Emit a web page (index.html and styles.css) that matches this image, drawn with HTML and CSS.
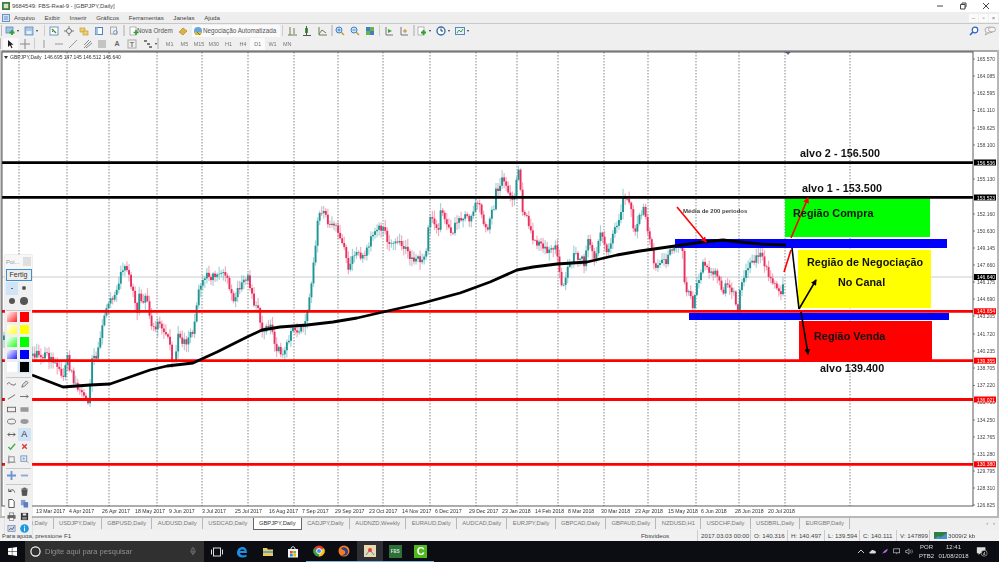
FILE: index.html
```html
<!DOCTYPE html>
<html lang="pt">
<head>
<meta charset="utf-8">
<title>9684549: FBS-Real-9 - [GBPJPY,Daily]</title>
<link rel="stylesheet" href="styles.css">
</head>
<body>
<div class="app">
  <header class="titlebar">
    <svg class="applogo" viewBox="0 0 9 9"><rect width="9" height="9" fill="#3f7d3f"/><rect x="2" y="2" width="5" height="5" fill="#d5e6c8"/></svg>
    <span class="title">9684549: FBS-Real-9 - [GBPJPY,Daily]</span>
    <div class="winctl">
      <svg viewBox="0 0 8 8"><path d="M1 4h6" stroke="#444"/></svg>
      <svg viewBox="0 0 8 8"><path d="M1.500 2.500h4.500v4.500h-4.500zM3 2.500v-1.500h4v4h-1" fill="none" stroke="#444"/></svg>
      <svg viewBox="0 0 8 8"><path d="M1 1l6 6M7 1l-6 6" stroke="#444"/></svg>
    </div>
  </header>

  <nav class="menubar">
    <svg class="menuicon" viewBox="0 0 8 8"><rect x=".5" y=".5" width="7" height="7" fill="#cfe0f4" stroke="#6d93c4"/><path d="M2 3h4M2 5h4" stroke="#6d93c4"/></svg>
    <span>Arquivo</span><span>Exibir</span><span>Inserir</span><span>Gráficos</span><span>Ferramentas</span><span>Janelas</span><span>Ajuda</span>
    <div class="mdictl"><i>–</i><i>▫</i><i>×</i></div>
  </nav>

  <div class="toolbar">
    <span class="grip"></span>
    <span class="btn wide"><svg viewBox="0 0 10 10"><rect x="1" y="1" width="7" height="6" fill="#9cc3e6" stroke="#4f81bd" stroke-width=".7"/><path d="M7 4v5M4.500 6.500h5" stroke="#2ea32e" stroke-width="1.800"/></svg><b class="caret"></b></span>
    <span class="btn wide"><svg viewBox="0 0 10 10"><rect x="1" y="1" width="8" height="8" fill="#a9c7e8" stroke="#4f81bd" stroke-width=".7"/><rect x="2.500" y="5" width="5" height="3" fill="#e8eef5"/></svg><b class="caret"></b></span>
    <span class="sep"></span>
    <span class="btn"><svg viewBox="0 0 10 10"><rect x="1" y="1" width="8" height="8" fill="#fff" stroke="#4f81bd" stroke-width=".8"/><path d="M3 3l4 4" stroke="#2ea32e" stroke-width="1.500"/><path d="M3 6l1-1" stroke="#d33"/></svg></span>
    <span class="btn"><svg viewBox="0 0 10 10"><circle cx="5" cy="5" r="2.500" fill="none" stroke="#777"/><path d="M5 0v3M5 7v3M0 5h3M7 5h3" stroke="#777"/></svg></span>
    <span class="btn"><svg viewBox="0 0 10 10"><rect x="1" y="2" width="5" height="4" fill="#f0cf6a" stroke="#b8912c" stroke-width=".6"/><rect x="4" y="5" width="5" height="4" fill="#f0cf6a" stroke="#b8912c" stroke-width=".6"/></svg></span>
    <span class="btn"><svg viewBox="0 0 10 10"><rect x="1.500" y="1.500" width="7" height="7" fill="#fff" stroke="#4f81bd"/><rect x="1.500" y="1.500" width="2.500" height="7" fill="#9cc3e6"/></svg></span>
    <span class="btn"><svg viewBox="0 0 10 10"><rect x="1.500" y="1" width="6" height="7" fill="#eee" stroke="#aaa"/><circle cx="6.500" cy="6.500" r="2" fill="none" stroke="#7a9cc4"/></svg></span>
    <span class="sep"></span>
    <span class="btn"><svg viewBox="0 0 10 10"><rect x="1" y="1" width="6" height="8" fill="#fff" stroke="#999" stroke-width=".7"/><path d="M7 4v5M4.500 6.500h5" stroke="#2ea32e" stroke-width="1.600"/></svg></span>
    <span class="label order">Nova Ordem</span>
    <span class="btn goldbtn"><svg viewBox="0 0 10 10"><path d="M1 6l4-4 4 3-4 4z" fill="#e0b040" stroke="#a07820" stroke-width=".6"/></svg></span>
    <span class="autotrade"><svg viewBox="0 0 10 10"><circle cx="5" cy="5" r="4" fill="#6aa6d8"/><path d="M2 6h6v3H2z" fill="#e8b03c"/><path d="M4 6l3 3" stroke="#2ea32e"/></svg><span>Negociação Automatizada</span></span>
    <span class="sep"></span>
    <span class="btn"><svg viewBox="0 0 10 10"><path d="M3 1v8M7 2v6M1 9h9" stroke="#6a7f55" fill="none"/></svg></span>
    <span class="btn"><svg viewBox="0 0 10 10"><rect x="3" y="2" width="3" height="5" fill="#3fa33f"/><path d="M4.500 0v9M1 9.500h8" stroke="#555"/></svg></span>
    <span class="btn"><svg viewBox="0 0 10 10"><path d="M2 1v8h8M2 8l3-4 4 3" stroke="#6a7f55" fill="none"/></svg></span>
    <span class="sep tight"></span>
    <span class="btn"><svg viewBox="0 0 10 10"><circle cx="4" cy="4" r="3" fill="#cfe4f8" stroke="#3f7fc4"/><path d="M6 6l3 3" stroke="#c79a3a" stroke-width="1.500"/><path d="M2.500 4h3M4 2.500v3" stroke="#2f6fb4" stroke-width=".8"/></svg></span>
    <span class="btn"><svg viewBox="0 0 10 10"><circle cx="4" cy="4" r="3" fill="#cfe4f8" stroke="#3f7fc4"/><path d="M6 6l3 3" stroke="#c79a3a" stroke-width="1.500"/><path d="M2.500 4h3" stroke="#2f6fb4" stroke-width=".8"/></svg></span>
    <span class="btn"><svg viewBox="0 0 10 10"><rect x="1" y="1" width="4" height="4" fill="#3f7fc4"/><rect x="5" y="1" width="4" height="4" fill="#6fb04a"/><rect x="1" y="5" width="4" height="4" fill="#6fb04a"/><rect x="5" y="5" width="4" height="4" fill="#3f7fc4"/></svg></span>
    <span class="sep"></span>
    <span class="btn"><svg viewBox="0 0 10 10"><path d="M2 1v8h7" stroke="#777" fill="none"/><path d="M4 3l4 2-4 2z" fill="#3fa33f"/></svg></span>
    <span class="btn"><svg viewBox="0 0 10 10"><path d="M2 1v8h7" stroke="#777" fill="none"/><path d="M4 5h4M6 3v4" stroke="#c8862e"/></svg></span>
    <span class="sep"></span>
    <span class="btn wide"><svg viewBox="0 0 10 10"><rect x="1" y="1" width="6" height="8" fill="#fff" stroke="#999" stroke-width=".7"/><path d="M6.500 4v5M4 6.500h5" stroke="#2ea32e" stroke-width="1.800"/></svg><b class="caret"></b></span>
    <span class="btn wide"><svg viewBox="0 0 10 10"><circle cx="5" cy="5" r="4" fill="#fff" stroke="#2f6fb4" stroke-width="1.400"/><path d="M5 2.500V5h2" stroke="#333" fill="none"/></svg><b class="caret"></b></span>
    <span class="btn wide"><svg viewBox="0 0 10 10"><rect x=".5" y="1.500" width="9" height="7" fill="#e8f0fa" stroke="#5a87bd"/><path d="M2 7l2-3 2 2 2-3" stroke="#3fa33f" fill="none"/></svg><b class="caret"></b></span>
    <div class="findarea">
      <svg viewBox="0 0 10 10"><circle cx="6" cy="4" r="2.800" fill="#fff" stroke="#2f62c4" stroke-width="1.200"/><path d="M4 6L1 9" stroke="#2f62c4" stroke-width="1.600"/></svg>
      <svg class="chat" viewBox="0 0 12 10"><ellipse cx="5" cy="4" rx="4" ry="3" fill="#f4f4f4" stroke="#aaa"/><ellipse cx="8" cy="3.500" rx="3.500" ry="2.500" fill="#f4f4f4" stroke="#aaa"/><path d="M2 6.500L1.500 9l3-2" fill="#f4f4f4" stroke="#aaa"/></svg>
    </div>
  </div>

  <div class="toolbar second">
    <span class="grip"></span>
    <span class="btn on"><svg viewBox="0 0 10 10"><path d="M3 1v7l2-1.800 1.500 3 1-.5-1.500-3H8.500z" fill="#222"/></svg></span>
    <span class="btn"><svg viewBox="0 0 10 10"><path d="M5 0v10M0 5h10" stroke="#888"/></svg></span>
    <span class="sep"></span>
    <span class="btn"><svg viewBox="0 0 10 10"><path d="M5 1v8" stroke="#999"/></svg></span>
    <span class="btn"><svg viewBox="0 0 10 10"><path d="M1 5h8" stroke="#999"/></svg></span>
    <span class="btn"><svg viewBox="0 0 10 10"><path d="M1 9l8-8" stroke="#999"/></svg></span>
    <span class="btn"><svg viewBox="0 0 10 10"><path d="M1 9l7-7M3 9l6-5M1 6l5-5" stroke="#888" fill="none"/></svg></span>
    <span class="btn"><svg viewBox="0 0 10 10"><path d="M1 2h8M1 4h8M1 6h8M1 8h8" stroke="#999" fill="none"/></svg></span>
    <span class="btn txt">A</span>
    <span class="btn"><svg viewBox="0 0 10 10"><rect x="1" y="1" width="8" height="8" fill="none" stroke="#aaa"/><text x="5" y="7.500" class="mini">T</text></svg></span>
    <span class="btn wide"><svg viewBox="0 0 10 10"><path d="M1 2h3M4 5h3M6 8h3" stroke="#555" stroke-width="1.400"/></svg><b class="caret"></b></span>
    <span class="sep wide-gap"></span>
    <span class="tf">M1</span><span class="tf">M5</span><span class="tf">M15</span><span class="tf">M30</span><span class="tf">H1</span><span class="tf">H4</span><span class="tf cur">D1</span><span class="tf">W1</span><span class="tf">MN</span>
  </div>

  <main class="chart">
    <svg class="plot" viewBox="0 50 999 466" width="999" height="466">
      <rect x="0" y="50" width="999" height="466" fill="#fff"/>
      <rect x="0" y="50" width="999" height="2" fill="#a8a8a8"/>
      <rect x="0" y="50" width="2" height="466" fill="#c8c8c8"/>
      <rect x="997" y="50" width="2" height="466" fill="#b8b8b8"/>
      <path class="grid" d="M19 52V506M67 52V506M109 52V506M157 52V506M202 52V506M248 52V506M294 52V506M338 52V506M383 52V506M430 52V506M476 52V506M517 52V506M558 52V506M604 52V506M648 52V506M696 52V506M739 52V506M785 52V506M850 52V506"/>
      <path d="M2 277H973" stroke="#c9ced4" stroke-width="1"/>
      <g id="candles"></g>

      <rect x="785" y="198" width="145" height="39" fill="#00ff00"/>
      <rect x="798" y="250" width="133" height="58" fill="#ffff00"/>
      <rect x="799" y="321" width="133" height="40" fill="#ff0000"/>
      <rect x="675" y="239" width="272" height="9" fill="#0000ff"/>
      <rect x="689" y="313" width="260" height="7" fill="#0000ff"/>

      <path class="hl black" d="M2 162.700H973M2 197.300H973"/>
      <path class="hl red" d="M2 311.300H973M2 360.700H973M2 399.500H973M2 464.300H973"/>
      <path class="ma" d="M32 375L63 387L90 385L110 384L130 377L150 370L167 366L193 363L217 352L247 337L262 330L280 327L307 325L333 322L357 318L383 312L423 303L460 293L490 282L517 270L533 267L557 264L587 262L617 255L640 251L675 246L703 242L723 240L740 242L760 244L786 245"/>

      <defs>
        <marker id="ar" markerWidth="6" markerHeight="6" refX="5" refY="3" orient="auto" markerUnits="userSpaceOnUse"><path d="M0 0L6 3L0 6z" fill="#f00"/></marker>
        <marker id="ak" markerWidth="6" markerHeight="6" refX="5" refY="3" orient="auto" markerUnits="userSpaceOnUse"><path d="M0 0L6 3L0 6z" fill="#000"/></marker>
      </defs>
      <path class="arrow r" d="M677 207L706 242" marker-end="url(#ar)"/>
      <path class="arrow r" d="M784 272L791 250"/>
      <path class="arrow r" d="M791 238L808 198" marker-end="url(#ar)"/>
      <path class="arrow k" d="M792 248L799 309"/>
      <path class="arrow k" d="M799 309L816 280" marker-end="url(#ak)"/>
      <path class="arrow k" d="M801 312L808 354" marker-end="url(#ak)"/>

      <text class="note" x="683" y="213">Média de 200 periodos</text>
      <text class="big" x="800" y="157">alvo 2 - 156.500</text>
      <text class="big" x="802" y="192">alvo 1 - 153.500</text>
      <text class="big" x="793" y="217">Região Compra</text>
      <text class="big" x="807" y="266">Região de Negociação</text>
      <text class="big" x="838" y="286">No Canal</text>
      <text class="big" x="814" y="340">Região Venda</text>
      <text class="big" x="820" y="372">alvo 139.400</text>

      <text class="info" x="10" y="59">GBPJPY,Daily  146.695 147.145 146.512 146.640</text>
      <path d="M4 56h4l-2 3z" fill="#333"/>
      <path d="M785.500 52h5l-2.500 3z" fill="#5a6f9a"/>

      <rect x="2" y="52" width="971" height="454" class="frame"/>
      <path class="ticks" d="M973 59h2M973 76h2M973 93h2M973 110.500h2M973 128h2M973 145h2M973 179h2M973 214h2M973 231h2M973 248h2M973 265h2M973 282h2M973 299h2M973 316h2M973 334h2M973 351h2M973 368h2M973 385.500h2M973 420h2M973 437h2M973 454h2M973 471h2M973 488h2M973 505h2"/>
      <g class="axis">
        <text x="977" y="61">165.570</text><text x="977" y="78">164.085</text><text x="977" y="95">162.595</text><text x="977" y="112">161.110</text><text x="977" y="130">159.625</text><text x="977" y="147">158.100</text><text x="977" y="181">155.130</text><text x="977" y="216">152.160</text><text x="977" y="233">150.630</text><text x="977" y="250">149.145</text><text x="977" y="267">147.660</text><text x="977" y="284">146.175</text><text x="977" y="301">144.690</text><text x="977" y="318">143.205</text><text x="977" y="336">141.720</text><text x="977" y="353">140.235</text><text x="977" y="370">138.705</text><text x="977" y="387">137.220</text><text x="977" y="404">135.735</text><text x="977" y="422">134.250</text><text x="977" y="439">132.765</text><text x="977" y="456">131.280</text><text x="977" y="473">129.795</text><text x="977" y="490">128.310</text><text x="977" y="507">126.825</text>
      </g>
      <g class="pricetag">
        <rect x="974" y="159.500" width="22" height="6" fill="#000"/><text x="977" y="164.500">156.536</text>
        <rect x="974" y="194.500" width="22" height="6" fill="#000"/><text x="977" y="199.500">153.523</text>
        <rect x="974" y="274" width="22" height="6" fill="#000"/><text x="977" y="279">146.640</text>
        <rect x="974" y="308.300" width="22" height="6" fill="#f00"/><text x="977" y="313.300">143.654</text>
        <rect x="974" y="357.700" width="22" height="6" fill="#f00"/><text x="977" y="362.700">139.355</text>
        <rect x="974" y="396.500" width="22" height="6" fill="#f00"/><text x="977" y="401.500">136.021</text>
        <rect x="974" y="461.300" width="22" height="6" fill="#f00"/><text x="977" y="466.300">130.380</text>
      </g>
      <g class="dates">
        <text x="36" y="513">13 Mar 2017</text><text x="69" y="513">4 Apr 2017</text><text x="102" y="513">26 Apr 2017</text><text x="135" y="513">18 May 2017</text><text x="169" y="513">9 Jun 2017</text><text x="202" y="513">3 Jul 2017</text><text x="235" y="513">25 Jul 2017</text><text x="269" y="513">16 Aug 2017</text><text x="302" y="513">7 Sep 2017</text><text x="335" y="513">29 Sep 2017</text><text x="369" y="513">23 Oct 2017</text><text x="402" y="513">14 Nov 2017</text><text x="435" y="513">6 Dec 2017</text><text x="469" y="513">29 Dec 2017</text><text x="502" y="513">23 Jan 2018</text><text x="535" y="513">14 Feb 2018</text><text x="568" y="513">8 Mar 2018</text><text x="601" y="513">30 Mar 2018</text><text x="635" y="513">23 Apr 2018</text><text x="668" y="513">15 May 2018</text><text x="701" y="513">6 Jun 2018</text><text x="735" y="513">28 Jun 2018</text><text x="768" y="513">20 Jul 2018</text>
      </g>
    </svg>
  </main>

  <div class="tabs">
    <span class="tab first">EURUSD,Daily</span><span class="tab">USDJPY,Daily</span><span class="tab">GBPUSD,Daily</span><span class="tab">AUDUSD,Daily</span><span class="tab">USDCAD,Daily</span><span class="tab active">GBPJPY,Daily</span><span class="tab">CADJPY,Daily</span><span class="tab">AUDNZD,Weekly</span><span class="tab">EURAUD,Daily</span><span class="tab">AUDCAD,Daily</span><span class="tab">EURJPY,Daily</span><span class="tab">GBPCAD,Daily</span><span class="tab">GBPAUD,Daily</span><span class="tab">NZDUSD,H1</span><span class="tab">USDCHF,Daily</span><span class="tab">USDBRL,Daily</span><span class="tab">EURGBP,Daily</span>
    <span class="tabnav">‹ &nbsp; ›</span>
  </div>

  <footer class="status">
    <span class="help">Para ajuda, pressione F1</span>
    <span class="cell st-name">Fbsvideos</span>
    <span class="cell st-time">2017.03.03 00:00</span>
    <span class="cell st-o">O: 140.316</span>
    <span class="cell st-h">H: 140.497</span>
    <span class="cell st-l">L: 139.594</span>
    <span class="cell st-c">C: 140.111</span>
    <span class="cell st-v">V: 147899</span>
    <span class="cell st-conn"><svg viewBox="0 0 13 7"><rect width="13" height="7" fill="#2f7f3f"/><path d="M0 7L4 4 7 5 13 1V7z" fill="#4a90d0"/></svg>3009/2 kb</span>
  </footer>

  <div class="taskbar">
    <span class="start"><svg viewBox="0 0 10 10"><path d="M0 1.400L4.300.8V4.700H0zM4.800.7L10 0V4.700H4.800zM0 5.200H4.300V9.200L0 8.600zM4.800 5.200H10V10L4.800 9.300z" fill="#fff"/></svg></span>
    <span class="search">
      <svg class="ring" viewBox="0 0 12 12"><circle cx="6" cy="6" r="5" fill="none" stroke="#fff" stroke-width="1.300"/></svg>
      <span class="ph">Digite aqui para pesquisar</span>
      <svg class="mic" viewBox="0 0 8 12"><rect x="2.500" y="1" width="3" height="6" rx="1.500" fill="none" stroke="#888"/><path d="M1 5c0 5 6 5 6 0M4 9v2" fill="none" stroke="#888"/></svg>
    </span>
    <span class="tbtn"><svg viewBox="0 0 12 10"><rect x="2.500" y="1" width="7" height="8" fill="none" stroke="#ddd"/><path d="M.5 2.500v5M11.500 2.500v5" stroke="#ddd"/></svg></span>
    <span class="tbtn"><svg viewBox="0 0 12 12"><path d="M1 7c0-4 3-6 5.500-6S11 3 11 7H4c.3 2.500 4 3 6.500 1.500v2.300C7 12.500 1 11.500 1 7zM4 5h4.500C8.300 3 4.500 3 4 5z" fill="#1b8fe0"/></svg></span>
    <span class="tbtn"><svg viewBox="0 0 12 12"><path d="M1 2h4l1 1.500h5V10H1z" fill="#f2c94c"/><rect x="1" y="5" width="10" height="2" fill="#5aa6dc"/></svg></span>
    <span class="tbtn"><svg viewBox="0 0 12 12"><rect x="1" y="3" width="10" height="8.500" fill="#f4f4f4"/><path d="M4 3c0-3 4-3 4 0" fill="none" stroke="#f4f4f4"/><rect x="3" y="5" width="2.700" height="2.500" fill="#e8452c"/><rect x="6.300" y="5" width="2.700" height="2.500" fill="#7cb82f"/><rect x="3" y="8" width="2.700" height="2.500" fill="#1b8fe0"/><rect x="6.300" y="8" width="2.700" height="2.500" fill="#f5b800"/></svg></span>
    <span class="tbtn mark"><svg viewBox="0 0 12 12"><circle cx="6" cy="6" r="5.500" fill="#e33b2e"/><path d="M6 6L11 3.200A5.500 5.500 0 0 1 6 11.500z" fill="#f6c321"/><path d="M6 6L6 11.500A5.500 5.500 0 0 1 1 3.200z" fill="#2fa24b"/><circle cx="6" cy="6" r="2.500" fill="#4a8fe8" stroke="#fff" stroke-width=".9"/></svg></span>
    <span class="tbtn mark"><svg viewBox="0 0 12 12"><circle cx="6" cy="6" r="5.500" fill="#f57c1f"/><path d="M3 3c3-2 7 0 7 4 0 3-4 5-7 3 3 0 5-1 4-4-1-1-3-1-4-3z" fill="#2b3f8f"/></svg></span>
    <span class="tbtn active mark"><svg viewBox="0 0 12 12"><rect x="0" y="0" width="12" height="12" fill="#e8d9b0"/><path d="M2 10L6 5l4 5" stroke="#3f8fd0" fill="none"/><circle cx="6" cy="5" r="2" fill="#e2443a"/></svg></span>
    <span class="tbtn mark"><span class="fbs">FBS</span></span>
    <span class="tbtn mark"><span class="cbox">C</span></span>
    <div class="tray">
      <svg viewBox="0 0 8 5" class="ti"><path d="M1 4l3-3 3 3" fill="none" stroke="#ccc"/></svg>
      <svg viewBox="0 0 12 8" class="ti"><path d="M2 7C0 7 0 4 2.500 4 3 1 7 1 8 3c3 0 3 4 1 4z" fill="#ddd"/></svg>
      <svg viewBox="0 0 10 10" class="ti"><path d="M1 9C3 4 6 2 9 1 8.500 5 6 7 3 7z" fill="#b266d8"/></svg>
      <svg viewBox="0 0 12 10" class="ti"><rect x="1" y="1" width="9" height="6" fill="none" stroke="#ccc"/><path d="M5.500 7v2" stroke="#ccc"/></svg>
      <svg viewBox="0 0 12 10" class="ti"><path d="M1 3.500h2L6 1v8L3 6.500H1z" fill="none" stroke="#ccc"/><path d="M8 3c1 1 1 3 0 4M10 2c1.500 2 1.500 4 0 6" fill="none" stroke="#ccc" stroke-width=".8"/></svg>
      <span class="lang"><span>POR</span><span>PTB2</span></span>
      <span class="clock"><span>12:41</span><span>01/08/2018</span></span>
      <svg viewBox="0 0 14 12" class="notif"><path d="M1 1h10v7H5L3 10V8H1z" fill="#ddd"/><circle cx="9.500" cy="8" r="3.500" fill="#111" stroke="#ddd" stroke-width=".6"/><text x="9.500" y="10" class="notifn">4</text></svg>
    </div>
  </div>

  <aside class="pen">
    <div class="penhead"><span>Poi...</span><i></i></div>
    <button class="fertig">Fertig</button>
    <div class="pengrid">
      <span class="c sel"><b class="dot d1"></b></span><span class="c"><b class="dot d2"></b></span>
      <span class="c"><b class="dot d3"></b></span><span class="c"><b class="dot d4"></b></span>
      <span class="hr s1"></span>
      <span class="c"><b class="sw fr"></b></span><span class="c"><b class="sw sr"></b></span>
      <span class="c"><b class="sw fy"></b></span><span class="c"><b class="sw sy"></b></span>
      <span class="c"><b class="sw fg"></b></span><span class="c"><b class="sw sg"></b></span>
      <span class="c"><b class="sw fb"></b></span><span class="c"><b class="sw sb"></b></span>
      <span class="c"><b class="sw fw"></b></span><span class="c sel"><b class="sw sk"></b></span>
      <span class="hr s2"></span>
      <span class="c"><svg viewBox="0 0 10 10"><path d="M0 5c2-4 3-1 5 0s3 1 5-1" fill="none" stroke="#555"/></svg></span><span class="c"><svg viewBox="0 0 10 10"><path d="M2 8l1-3 4-4 2 2-4 4z" fill="#ddd" stroke="#555" stroke-width=".8"/></svg></span>
      <span class="c"><svg viewBox="0 0 10 10"><path d="M1 8l8-5" stroke="#666"/></svg></span><span class="c"><svg viewBox="0 0 10 10"><path d="M0 5h9M7 3l2 2-2 2" fill="none" stroke="#666"/></svg></span>
      <span class="c"><svg viewBox="0 0 10 10"><rect x=".5" y="2.500" width="9" height="5" fill="none" stroke="#666"/></svg></span><span class="c"><svg viewBox="0 0 10 10"><rect x=".5" y="2.500" width="9" height="5" fill="#999"/></svg></span>
      <span class="c"><svg viewBox="0 0 10 10"><ellipse cx="5" cy="5" rx="4.500" ry="2.700" fill="none" stroke="#666"/></svg></span><span class="c"><svg viewBox="0 0 10 10"><ellipse cx="5" cy="5" rx="4.500" ry="2.700" fill="#999"/></svg></span>
      <span class="c"><svg viewBox="0 0 10 10"><path d="M1 5h8M3 3L1 5l2 2M7 3l2 2-2 2" fill="none" stroke="#555"/></svg></span><span class="c sel ltr">A</span>
      <span class="c"><svg viewBox="0 0 10 10"><path d="M1.500 5.500l2.500 2.500 5-6" fill="none" stroke="#3fb03f" stroke-width="1.500"/></svg></span><span class="c"><svg viewBox="0 0 10 10"><path d="M2.500 2.500l5 5M7.500 2.500l-5 5" stroke="#e03030" stroke-width="1.500"/></svg></span>
      <span class="c"><svg viewBox="0 0 10 10"><rect x="2" y="2" width="6" height="6" fill="none" stroke="#888"/><path d="M2 0v10M0 8h10" stroke="#888" stroke-width=".6"/></svg></span><span class="c"><svg viewBox="0 0 10 10"><rect x="1" y="1" width="6.500" height="6" fill="#e8eef6" stroke="#6d93c4"/><path d="M4.200 2.500v3M2.700 4h3" stroke="#6d93c4" stroke-width=".7"/><path d="M7.500 7l2 2" stroke="#c79a3a"/></svg></span>
      <span class="hr s3"></span>
      <span class="c"><svg viewBox="0 0 10 10"><path d="M4 0h2v4h4v2H6v4H4V6H0V4h4z" fill="#6d93d4"/></svg></span><span class="c"><svg viewBox="0 0 10 10"><rect x="1" y="4" width="8" height="2" fill="#8fa8d0"/></svg></span>
      <span class="hr s3"></span>
      <span class="c"><svg viewBox="0 0 10 10"><path d="M2 2v3h3M2.500 5c2-3 6-2 6 1" fill="none" stroke="#444"/></svg></span><span class="c"><svg viewBox="0 0 10 10"><path d="M2 3h6l-.6 6.500H2.600zM1.500 2h7M4 2V1h2v1" fill="#555" stroke="#444" stroke-width=".7"/></svg></span>
      <span class="c"><svg viewBox="0 0 10 10"><path d="M2 .5h4l2 2v7H2z" fill="#fff" stroke="#444"/></svg></span><span class="c"><svg viewBox="0 0 10 10"><rect x="1" y="1" width="5" height="6" fill="#7f9fd8"/><rect x="4" y="3.500" width="5" height="6" fill="#5a7cc0"/></svg></span>
      <span class="c"><svg viewBox="0 0 10 10"><rect x="2.500" y="1" width="5" height="3" fill="#eee" stroke="#555" stroke-width=".6"/><rect x=".5" y="3.500" width="9" height="4" fill="#666"/><rect x="2.500" y="6.500" width="5" height="3" fill="#fff" stroke="#555" stroke-width=".6"/></svg></span><span class="c"><svg viewBox="0 0 10 10"><rect x="1" y="1" width="8" height="8" fill="#333"/><rect x="3" y="1.500" width="4" height="2.500" fill="#ddd"/><rect x="2.500" y="5.500" width="5" height="3" fill="#888"/></svg></span>
      <span class="c"><svg viewBox="0 0 10 10"><rect x="1" y="1.500" width="8" height="7" fill="#cfd8ec" stroke="#6d7fa8" stroke-width=".7"/><path d="M2 7l2-2 2 1 2-3" fill="none" stroke="#456"/></svg></span><span class="c"><svg viewBox="0 0 10 10"><circle cx="5" cy="5" r="4.800" fill="#1b9ae0"/><path d="M5 4v4M5 2v1" stroke="#fff" stroke-width="1.200"/></svg></span>
    </div>
  </aside>
</div>
<script src="chart.js"></script>
</body>
</html>
```

FILE: styles.css
```css
* { box-sizing: border-box; }
html, body { margin: 0; padding: 0; background: #fff; }
body { font-family: "Liberation Sans", Arial, sans-serif; overflow: hidden; }
.app { position: relative; width: 999px; height: 562px; display: flex; flex-direction: column; overflow: hidden; color: #444; filter: blur(.35px); }

.titlebar { height: 12px; background: #fff; display: flex; align-items: center; padding-left: 2px; font-size: 5.900px; color: #444; flex: none; }
.applogo { width: 8px; height: 8px; margin-right: 2px; }
.winctl { margin-left: auto; display: flex; gap: 15px; padding-right: 9px; }
.winctl svg { width: 8px; height: 8px; }

.menubar { height: 11px; background: #eeeeee; display: flex; align-items: center; font-size: 6.200px; color: #444; padding-left: 2px; flex: none; }
.menuicon { width: 8px; height: 8px; margin-right: 4px; }
.menubar > span { margin-right: 9.500px; }
.mdictl { margin-left: auto; display: flex; gap: 1px; padding-right: 1px; }
.mdictl i { width: 9px; height: 8px; background: #fbfbfb; font-style: normal; font-size: 6px; line-height: 8px; text-align: center; color: #777; }

.toolbar { height: 14px; background: #efefef; border-top: 1px solid #c8c8c8; display: flex; align-items: center; padding-left: 1px; flex: none; font-size: 6.300px; color: #555; }
.toolbar.second { height: 13px; border-top: 0; padding-left: 0; }
.toolbar svg { width: 10px; height: 10px; display: block; flex: none; }
.grip { width: 2px; height: 11px; border-left: 1px solid #bbb; margin-right: 1px; flex: none; }
.btn { width: 15px; height: 12px; display: flex; align-items: center; justify-content: center; flex: none; }
.btn.wide { width: 19px; justify-content: flex-start; padding-left: 1px; }
.second .btn { width: 14.600px; }
.second .btn.wide { width: 17px; padding-left: 4px; }
.btn.on { background: #fafafa; }
.btn.txt { font-size: 7px; font-weight: bold; color: #666; }
.caret { width: 0; height: 0; margin-left: 2px; border: 1.500px solid transparent; border-top: 2px solid #333; border-bottom: 0; flex: none; }
.sep { width: 1.500px; height: 11px; background: #cdcdcd; margin: 0 1.500px; flex: none; }
.sep.tight { margin-right: -.500px; }
.sep.wide-gap { margin-right: 3.500px; }
.label.order { margin-left: -4px; margin-right: 2.500px; white-space: nowrap; width: 36px; flex: none; }
.autotrade { display: flex; align-items: center; background: #fafafa; height: 12px; padding: 0 0 0 1px; white-space: nowrap; width: 88px; flex: none; margin-left: 1.500px; }
.tf { width: 14.700px; text-align: center; font-size: 5.500px; color: #777; flex: none; line-height: 12px; }
.tf.cur { background: #fafafa; }
.mini { font-size: 7px; text-anchor: middle; fill: #777; font-weight: bold; }
.findarea { margin-left: auto; display: flex; gap: 5px; padding-right: 3px; align-items: center; }
.findarea .chat { width: 12px; }

.chart { height: 466px; flex: none; }
.plot { display: block; }
.grid { stroke: #555; stroke-width: .7; stroke-dasharray: 1.500 1.500; fill: none; }
.hl { fill: none; stroke-width: 2.800; }
.hl.black { stroke: #000; }
.hl.red { stroke: #f00; }
.ma { fill: none; stroke: #000; stroke-width: 2.800; stroke-linejoin: round; }
.arrow { fill: none; stroke-width: 1.600; }
.arrow.r { stroke: #f00; }
.arrow.k { stroke: #000; }
.big { font-size: 10.800px; font-weight: bold; fill: #111; letter-spacing: .05px; }
.note { font-size: 6px; font-weight: bold; fill: #444; }
.info { font-size: 5px; fill: #333; white-space: pre; }
.frame { fill: none; stroke: #333; stroke-width: .8; }
.ticks { stroke: #555; stroke-width: .7; fill: none; }
.axis text { font-size: 5px; fill: #444; }
.pricetag text { font-size: 5px; fill: #fff; }
.dates text { font-size: 5.200px; fill: #333; }

.tabs { height: 14px; background: #efefef; border-top: 2px solid #b8b8b8; display: flex; align-items: stretch; font-size: 5.800px; color: #777; flex: none; padding-left: 1px; }
.tab { padding: 0 5.300px; border-right: 1px solid #b8b8b8; line-height: 11px; white-space: nowrap; height: 11px; flex: none; }
.tab.first { padding-left: 7.400px; }
.tab.active { background: #fff; color: #333; border: 1px solid #666; border-top: 0; height: 12px; margin-left: -1px; }
.tabnav { margin-left: auto; padding-right: 4px; color: #777; line-height: 11px; }

.status { height: 11px; background: #f1f1f1; display: flex; align-items: center; font-size: 6.200px; color: #444; flex: none; }
.help { width: 638px; padding-left: 2px; flex: none; }
.cell { border-right: 1px solid #ccc; height: 11px; line-height: 11px; padding-left: 3px; flex: none; white-space: nowrap; }
.st-name { width: 60px; }
.st-time { width: 53px; }
.st-o, .st-h, .st-c { width: 37px; }
.st-l { width: 35px; }
.st-v { width: 33px; }
.st-conn { border: 0; display: flex; align-items: center; gap: 1px; padding-left: 4px; }
.st-conn svg { width: 13px; height: 7px; }

.taskbar { height: 21px; background: #0b0d12; display: flex; align-items: center; flex: none; color: #ddd; font-size: 6.500px; }
.start { width: 25px; height: 21px; display: flex; align-items: center; justify-content: center; flex: none; }
.start svg { width: 9px; height: 9px; }
.search { width: 179px; height: 21px; background: #303030; display: flex; align-items: center; padding-left: 5px; color: #8f8f8f; font-size: 7.500px; flex: none; }
.ring { width: 11px; height: 11px; margin-right: 4px; }
.mic { width: 6px; height: 9px; margin-left: auto; margin-right: 8px; }
.tbtn { width: 25.500px; height: 21px; display: flex; align-items: center; justify-content: center; flex: none; }
.tbtn svg { width: 12px; height: 12px; }
.tbtn.mark { border-bottom: 1px solid #7fb2dd; }
.tbtn.active { background: #2d2f33; }
.fbs { width: 13px; height: 13px; background: #2f6f3a; color: #cfe8cf; font-size: 4.500px; font-weight: bold; line-height: 13px; text-align: center; }
.cbox { width: 13px; height: 13px; background: #4fb81f; color: #fff; font-size: 11px; font-weight: bold; line-height: 13px; text-align: center; }
.tray { margin-left: auto; display: flex; align-items: center; height: 21px; }
.ti { width: 8px; height: 7px; margin-right: 4px; flex: none; }
.lang, .clock { display: flex; flex-direction: column; align-items: center; line-height: 9px; font-size: 6px; flex: none; }
.lang { width: 15px; margin: 0 4px 0 2px; }
.clock { width: 31px; margin-right: 7px; }
.notif { width: 12px; height: 11px; margin-right: 11px; flex: none; }
.notifn { font-size: 5px; text-anchor: middle; fill: #fff; }

.pen { position: absolute; left: 5px; top: 255px; width: 27px; height: 280px; background: #f0f0f0; box-shadow: 0 0 1px #999; overflow: hidden; }
.penhead { height: 13.500px; display: flex; align-items: center; justify-content: space-between; padding: 0 1px; font-size: 6px; color: #999; background: #f7f7f7; }
.penhead i { width: 8px; height: 9px; background: #dfdfdf; }
.fertig { display: block; width: 26px; height: 12.500px; margin: 0 0 1px .5px; padding: 0; background: #ededed; border: 1px solid #3c8fd0; font: 7px "Liberation Sans", Arial, sans-serif; color: #333; line-height: 10px; }
.pengrid { display: grid; grid-template-columns: 12.500px 12.500px; padding-left: .5px; }
.pengrid .c { width: 12.500px; height: 12.500px; display: flex; align-items: center; justify-content: center; }
.pengrid svg { width: 9px; height: 9px; display: block; }
.pengrid .sel { background: #cfe4f6; }
.hr { grid-column: 1 / 3; display: block; border-bottom: 1px solid #c8c8c8; }
.s1 { height: 3.500px; }
.s2 { height: 5px; }
.s3 { height: 3.500px; }
.dot { display: block; border-radius: 50%; background: #555; }
.d1 { width: 1.500px; height: 1.500px; }
.d2 { width: 4px; height: 4px; }
.d3 { width: 6px; height: 6px; }
.d4 { width: 8px; height: 8px; }
.sw { display: block; width: 9.500px; height: 9.500px; }
.fr { background: linear-gradient(135deg, #fff, #f22); }
.sr { background: #f00; }
.fy { background: linear-gradient(135deg, #fff, #ff2); }
.sy { background: #ff0; }
.fg { background: linear-gradient(135deg, #fff, #2f2); }
.sg { background: #0f0; }
.fb { background: linear-gradient(135deg, #fff, #22f); }
.sb { background: #00f; }
.fw { background: #fff; }
.sk { background: #000; }
.ltr { font-size: 9px; color: #333; }
```

FILE: chart.js
```js
// Draws the daily candles along the traced price path.
const path = [[3,340],[33,353],[47,357],[62,377],[66,357],[72,380],[88,400],[91,363],[98,350],[102,323],[108,305],[118,280],[123,263],[130,283],[136,310],[138,298],[147,300],[150,323],[160,327],[167,340],[173,365],[177,337],[187,343],[193,327],[197,290],[203,278],[213,275],[222,268],[227,283],[233,303],[238,288],[248,278],[252,300],[257,307],[262,332],[270,328],[275,347],[282,358],[288,340],[293,327],[298,333],[304,325],[307,307],[310,283],[313,263],[316,223],[323,208],[328,228],[335,227],[342,245],[347,268],[355,253],[363,260],[370,240],[383,223],[387,248],[393,238],[410,257],[422,262],[427,240],[428,215],[437,230],[440,212],[450,233],[458,218],[468,218],[478,200],[484,233],[493,208],[495,190],[503,178],[512,200],[518,170],[522,213],[528,223],[533,243],[543,247],[548,250],[555,247],[560,287],[567,270],[575,253],[583,263],[588,240],[593,260],[600,235],[605,253],[615,227],[623,197],[628,198],[633,230],[643,210],[647,237],[655,267],[665,260],[673,243],[682,250],[683,280],[692,307],[695,287],[703,263],[710,273],[715,267],[720,293],[728,283],[737,307],[740,280],[757,253],[765,267],[772,283],[780,292],[784,273]];
const NS = "http://www.w3.org/2000/svg";
const target = document.getElementById("candles");
let seed = 41;
const rnd = () => { seed = (seed * 16807) % 2147483647; return seed / 2147483647; };
const at = (x) => {
  for (let i = 1; i < path.length; i++) {
    if (x <= path[i][0]) {
      const [ax, ay] = path[i - 1], [bx, by] = path[i];
      return ay + (by - ay) * (x - ax) / (bx - ax || 1);
    }
  }
  return path[path.length - 1][1];
};
const add = (x, y, w, h, fill, opacity) => {
  const r = document.createElementNS(NS, "rect");
  r.setAttribute("x", x); r.setAttribute("y", y);
  r.setAttribute("width", w); r.setAttribute("height", Math.max(h, .6));
  r.setAttribute("fill", fill);
  if (opacity) r.setAttribute("opacity", opacity);
  target.appendChild(r);
};
let prev = at(3);
for (let x = 3; x <= 784; x += 2.05) {
  const close = at(x) + (rnd() - .5) * 9;
  const up = close < prev;
  const col = up ? "#1f9595" : "#e8305f";
  const top = Math.min(close, prev), bottom = Math.max(close, prev);
  const hi = top - rnd() * 7 - 1, lo = bottom + rnd() * 7 + 1;
  add(x + .35, hi, 1.2, lo - hi, col, .4);
  add(x, top, 1.9, bottom - top, col);
  prev = close;
}
```
